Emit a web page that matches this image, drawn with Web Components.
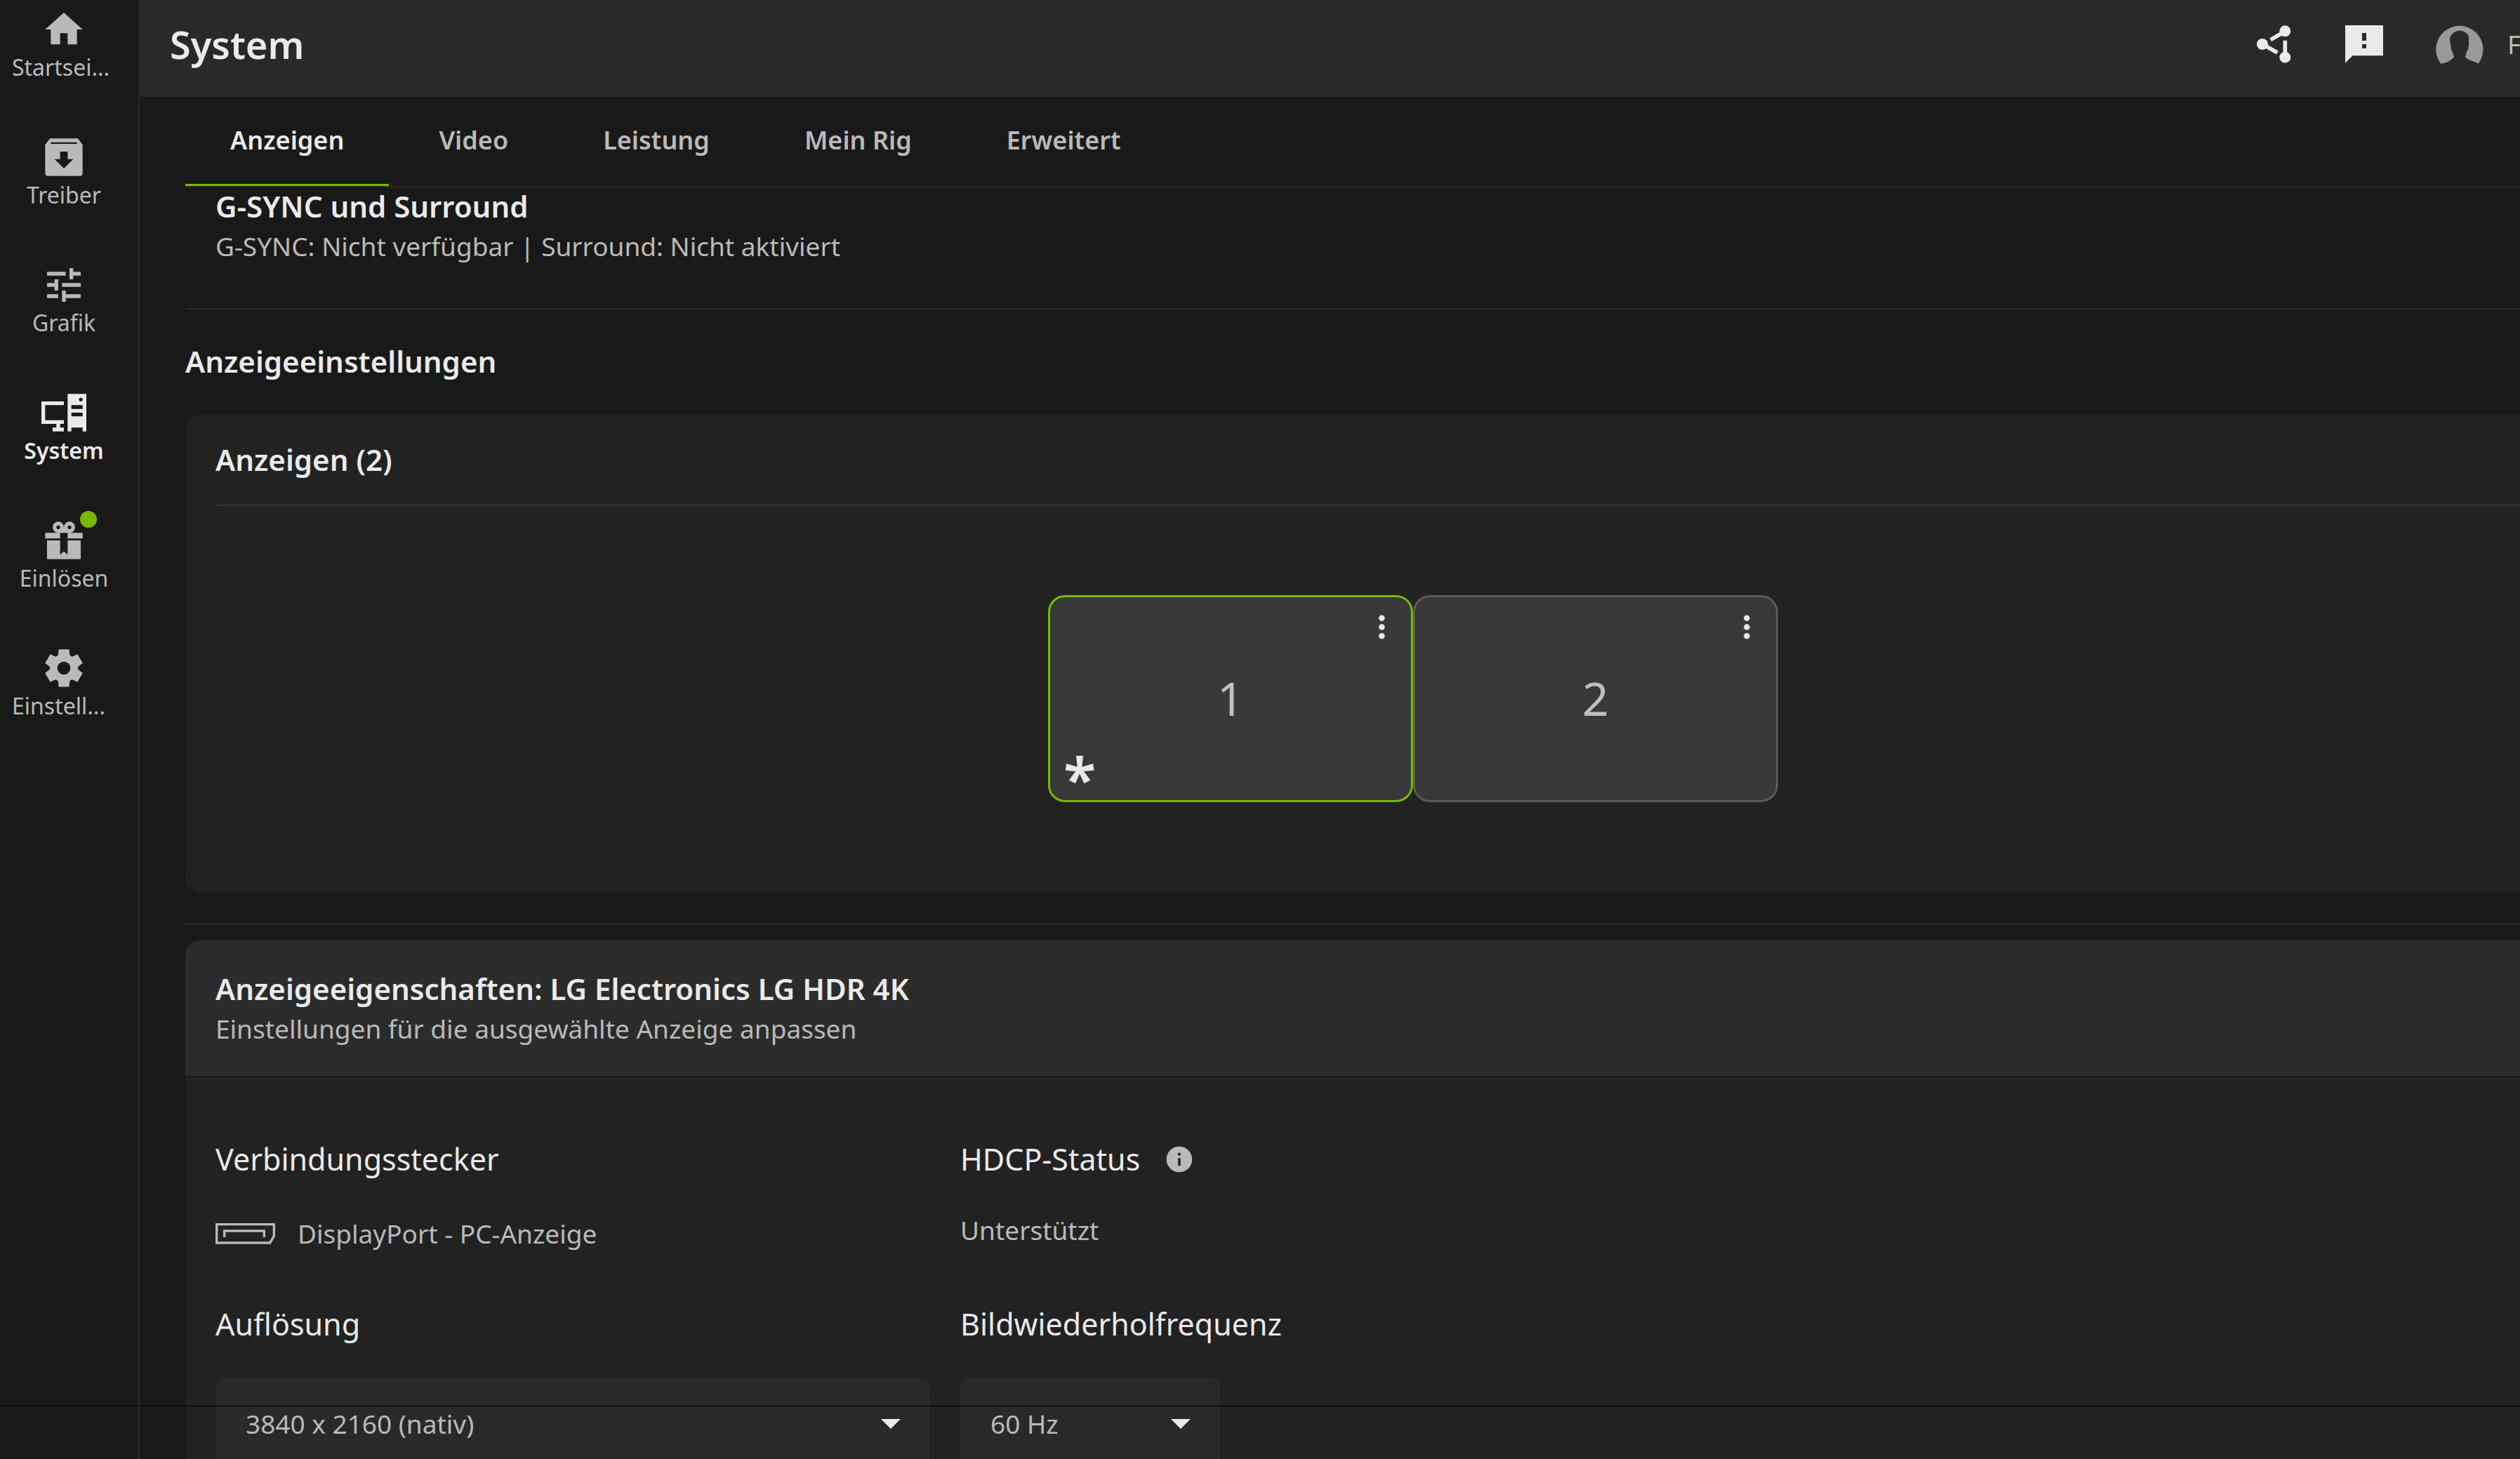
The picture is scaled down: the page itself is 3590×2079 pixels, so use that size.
<!DOCTYPE html>
<html lang="de">
<head>
<meta charset="utf-8">
<title>System</title>
<style>
    html, body {
        height: 100%;
        margin: 0;
        overflow: hidden;
        background: #191919;
    }

    body {
        --green: #76b900;
        --text: #eaeaea;
        --muted: #bababa;
        --line: #2a2a2a;
        --pad: 43px;
        color: var(--text);
        font-family: "Noto Sans", "Open Sans", sans-serif;
        font-size: 37px;
        line-height: 50px;
    }
</style>
</head>
<body>

<app-shell>
    <side-nav slot="nav">
        <nav-item icon="home" href="#home" clipped>Startsei...</nav-item>
        <nav-item icon="drivers" href="#drivers">Treiber</nav-item>
        <nav-item icon="tune" href="#graphics">Grafik</nav-item>
        <nav-item icon="system" href="#system" active>System</nav-item>
        <nav-item icon="gift" href="#redeem" badge>Einlösen</nav-item>
        <nav-item icon="gear" href="#settings" clipped>Einstell...</nav-item>
    </side-nav>

    <page-header slot="header" user="F">System</page-header>

    <tab-bar slot="tabs" tabs="Anzeigen,Video,Leistung,Mein Rig,Erweitert"></tab-bar>

    <summary-row>
        <span slot="title">G-SYNC und Surround</span>
        G-SYNC: Nicht verfügbar | Surround: Nicht aktiviert
    </summary-row>

    <section-title>Anzeigeeinstellungen</section-title>

    <display-map heading="Anzeigen (2)">
        <monitor-tile number="1" selected primary></monitor-tile>
        <monitor-tile number="2"></monitor-tile>
    </display-map>

    <property-card>
        <span slot="title">Anzeigeeigenschaften: LG Electronics LG HDR 4K</span>
        <span slot="subtitle">Einstellungen für die ausgewählte Anzeige anpassen</span>
        <info-field label="Verbindungsstecker" icon="port">DisplayPort - PC-Anzeige</info-field>
        <info-field label="HDCP-Status" hint>Unterstützt</info-field>
        <select-field label="Auflösung" value="3840 x 2160 (nativ)"></select-field>
        <select-field label="Bildwiederholfrequenz" value="60 Hz" style="--select-width: 370px"></select-field>
    </property-card>
</app-shell>

<script>
(function() {
    'use strict';

    // Icon name -> [viewBox, markup]
    const ICONS = {
        home: ['0 0 24 24', '<path d="M10 20v-6h4v6h5v-8h3L12 3 2 12h3v8z"/>'],
        drivers: ['0 0 24 24', '<path fill-rule="evenodd" d="M4.6 2h14.8L22 5.3v15.2a1.5 1.5 0 0 1-1.5 1.5h-17A1.5 1.5 0 0 1 2 20.5V5.3zM5.4 4a.4.4 0 0 0 0 .9h13.2a.4.4 0 0 0 0-.9zM10 9v4H7l5 5 5-5h-3V9z"/>'],
        tune: ['0 0 24 24', '<path d="M3 17v2h6v-2H3zM3 5v2h10V5H3zm10 16v-2h8v-2h-8v-2h-2v6h2zM7 9v2H3v2h4v2h2V9H7zm14 4v-2H11v2h10zm-6-4h2V7h4V5h-4V3h-2v6z"/>'],
        system: ['0 0 24 24', '<path fill-rule="evenodd" d="M0 6h12v2H2v8h10v2h-2v2h2v2H6v-2h2v-2H0zM14 2h10v20h-2v-2h-6v2h-2zM16 8v2h6V8zM16 12v2h6v-2zM21 4a1 1 0 1 0 .1 0z"/>'],
        gift: ['0 0 24 24', '<g fill="none" stroke="currentColor" stroke-width="2"><circle cx="9" cy="5" r="2"/><circle cx="15" cy="5" r="2"/></g><path d="M12 4.2L14.6 8H9.400zM2 8h8v3H2zM14 8h8v3h-8zM3 12h7v7.700l2-1.900 2 1.900V12h7v10H3z"/>'],
        gear: ['0 0 24 24', '<path fill-rule="evenodd" d="m9.250 22-.4-3.200q-.325-.125-.612-.3-.288-.175-.563-.375L4.700 19.375l-2.750-4.750 2.575-1.950Q4.500 12.500 4.500 12.338v-.675q0-.163.025-.338L1.950 9.375l2.750-4.750 2.975 1.250q.275-.2.575-.375.3-.175.6-.3l.4-3.200h5.500l.4 3.200q.325.125.613.3.287.175.562.375l2.975-1.250 2.750 4.750-2.575 1.950q.025.175.025.338v.674q0 .163-.05.338l2.575 1.950-2.750 4.750-2.950-1.250q-.275.2-.575.375-.3.175-.6.3l-.4 3.200ZM12 8.500a3.500 3.500 0 1 0 0 7 3.500 3.500 0 0 0 0-7z"/>'],
        share: ['0 0 192 192', '<circle cx="45" cy="96" r="24"/><circle cx="142" cy="40" r="24"/><circle cx="142" cy="152" r="24"/><path fill="none" stroke="currentColor" stroke-width="17" d="M80 77l50-29M60 104l49 28M142 80v60"/>'],
        feedback: ['0 0 192 192', '<path fill-rule="evenodd" d="M15 15h162v130H47l-32 31zM87 48v33h18V48zM87 96v17h18V96z"/>'],
        avatar: ['0 0 204 170', '<path d="M20 169A102 102 0 1 1 183 169L172 163C150 155 135 152 125 138Q131 132 132 118Q138 112 139 104L142 84L141 50Q130 27 98 26Q66 32 60 60L61 82L64 88L65 106Q67 113 71 118Q72 132 79 138Q60 165 20 169z"/>'],
        more: ['0 0 24 24', '<circle cx="12" cy="6" r="2"/><circle cx="12" cy="12" r="2"/><circle cx="12" cy="18" r="2"/>'],
        port: ['0 0 255 90', '<path fill="none" stroke="currentColor" stroke-width="10" d="M5 5h245v49l-17 30H5zM38 60V33h170v27"/>'],
        info: ['0 0 24 24', '<path fill-rule="evenodd" d="M12 2a10 10 0 1 0 0 20 10 10 0 0 0 0-20zM11 7h2v2h-2zM11 11h2v6h-2z"/>'],
        arrow: ['0 0 28 14', '<path d="M0 0h28L14 14z"/>']
    };

    function icon(name) {
        const [viewBox, body] = ICONS[name];
        return `<svg class="icon" viewBox="${viewBox}" fill="currentColor" aria-hidden="true">${body}</svg>`;
    }

    // Shared reset for every shadow root
    const BASE = `
        *, *::before { box-sizing: border-box; }
        svg { display: block; }
        h1, h2, h3, p { margin: 0; font-size: inherit; font-weight: inherit; }
        h2 { font-size: 42px; font-weight: 600; }
        a { color: inherit; text-decoration: none; }
        button, select {
            margin: 0; padding: 0; border: 0; background: none;
            color: inherit; font: inherit; cursor: pointer;
        }
    `;

    class BaseElement extends HTMLElement {
        constructor() {
            super();
            this.attachShadow({ mode: 'open' });
        }

        connectedCallback() {
            this.shadowRoot.innerHTML = `<style>${BASE}${this.styles()}</style>${this.markup()}`;
        }
    }

    class AppShell extends BaseElement {
        styles() {
            return `
                :host { display: flex; height: 100vh; overflow: hidden; }
                .page { flex: 1; min-width: 0; display: flex; flex-direction: column; }
                main { flex: 1; min-height: 0; overflow: hidden; padding-left: 65px; }
                .edge {
                    position: fixed; left: 0; right: 0; bottom: 75px;
                    height: 1px; background: #000; pointer-events: none;
                }
            `;
        }

        markup() {
            return `
                <slot name="nav"></slot>
                <div class="page">
                    <slot name="header"></slot>
                    <slot name="tabs"></slot>
                    <main><slot></slot></main>
                </div>
                <div class="edge"></div>
            `;
        }
    }

    class SideNav extends BaseElement {
        styles() {
            return `
                :host { display: block; flex: none; width: 199px; border-right: 2px solid var(--line); box-sizing: border-box; }
                nav { display: flex; flex-direction: column; gap: 75px; padding: 10px 15px 0 0; }
            `;
        }

        markup() {
            return '<nav aria-label="Hauptmenü"><slot></slot></nav>';
        }
    }

    class NavItem extends BaseElement {
        styles() {
            return `
                :host { display: block; color: var(--muted); font-size: 32px; line-height: 43px; }
                :host([active]) { color: var(--text); font-weight: 600; }
                :host([clipped]) .label { width: 148px; }
                a { display: flex; flex-direction: column; align-items: center; white-space: nowrap; }
                .glyph { position: relative; }
                .icon { width: 64px; height: 64px; }
                .dot {
                    position: absolute; top: -10px; right: -15px;
                    width: 24px; height: 24px; border-radius: 50%; background: var(--green);
                }
            `;
        }

        markup() {
            const dot = this.hasAttribute('badge') ? '<span class="dot"></span>' : '';
            return `
                <a href="${this.getAttribute('href')}">
                    <span class="glyph">${icon(this.getAttribute('icon'))}${dot}</span>
                    <span class="label"><slot></slot></span>
                </a>
            `;
        }
    }

    class PageHeader extends BaseElement {
        styles() {
            return `
                :host { display: block; flex: none; background: #292929; }
                header {
                    display: flex; align-items: center; justify-content: space-between;
                    height: 138px; padding: 0 0 12px 43px;
                }
                h1 { font-size: 54px; line-height: 64px; font-weight: 600; }
                .actions, .user { display: flex; align-items: center; }
                .actions { gap: 64px; }
                .icon { width: 64px; height: 64px; }
                .user { gap: 34px; padding-left: 6px; color: var(--muted); }
                .user .icon { width: 68px; height: 56px; color: #999; }
                .name { width: 18px; overflow: hidden; text-align: left; }
            `;
        }

        markup() {
            return `
                <header>
                    <h1><slot></slot></h1>
                    <div class="actions">
                        <button aria-label="Teilen">${icon('share')}</button>
                        <button aria-label="Feedback">${icon('feedback')}</button>
                        <button class="user">${icon('avatar')}<span class="name">${this.getAttribute('user')}</span></button>
                    </div>
                </header>
            `;
        }
    }

    class TabBar extends BaseElement {
        styles() {
            return `
                :host { display: block; flex: none; padding-left: 65px; }
                .tabs { display: flex; gap: 7px; border-bottom: 2px solid var(--line); }
                button {
                    height: 127px; padding: 0 64px; color: var(--muted);
                    border-bottom: 3px solid transparent; font-size: 36px; font-weight: 600;
                }
                button[aria-selected="true"] { color: var(--text); border-color: var(--green); }
            `;
        }

        markup() {
            const tabs = this.getAttribute('tabs').split(',');
            return `<div class="tabs" role="tablist">${tabs.map((tab, i) =>
                `<button role="tab" aria-selected="${i === 0}">${tab}</button>`).join('')}</div>`;
        }
    }

    class SummaryRow extends BaseElement {
        styles() {
            return `
                :host { display: block; padding: 2px var(--pad) 63px; border-bottom: 2px solid var(--line); }
                h2 { margin-bottom: 7px; }
                p { color: var(--muted); }
            `;
        }

        markup() {
            return '<h2><slot name="title"></slot></h2><p><slot></slot></p>';
        }
    }

    class SectionTitle extends BaseElement {
        styles() {
            return ':host { display: block; padding: 49px 0 51px; }';
        }

        markup() {
            return '<h2><slot></slot></h2>';
        }
    }

    class DisplayMap extends BaseElement {
        styles() {
            return `
                :host { display: block; padding-bottom: 44px; border-bottom: 2px solid var(--line); margin-bottom: 22px; }
                section { padding: 39px 0 0 var(--pad); border-radius: 21px 0 0 21px; background: #222; }
                h2 { padding-bottom: 39px; border-bottom: 2px solid #333; }
                .map { display: flex; justify-content: center; padding: 127px 0 129px 129px; }
            `;
        }

        markup() {
            return `
                <section>
                    <h2>${this.getAttribute('heading')}</h2>
                    <div class="map"><slot></slot></div>
                </section>
            `;
        }
    }

    class MonitorTile extends BaseElement {
        styles() {
            return `
                :host {
                    position: relative; display: block; box-sizing: border-box;
                    width: 520px; height: 295px;
                    border: 3px solid #5a5a5a; border-radius: 24px; background: #393939;
                }
                :host([selected]) { border-color: var(--green); }
                .screen {
                    width: 100%; height: 100%; padding-bottom: 4px;
                    color: #c0c0c0; font-size: 66px; line-height: 80px;
                }
                .more { position: absolute; top: 17px; right: 16px; }
                .more .icon { width: 51px; height: 51px; }
                .star {
                    position: absolute; left: 19px; bottom: 0;
                    font-size: 85px; line-height: 64px; font-weight: 600;
                }
            `;
        }

        markup() {
            const number = this.getAttribute('number');
            return `
                <button class="screen">${number}</button>
                <button class="more" aria-label="Optionen für Anzeige ${number}">${icon('more')}</button>
                ${this.hasAttribute('primary') ? '<span class="star">*</span>' : ''}
            `;
        }
    }

    class PropertyCard extends BaseElement {
        styles() {
            return `
                :host { display: block; border-radius: 21px 0 0 0; overflow: hidden; background: #222; }
                header { padding: 44px var(--pad) 42px; background: #2b2b2b; border-bottom: 2px solid #191919; }
                h2 { margin-bottom: 7px; }
                p { color: var(--muted); }
                .fields {
                    display: grid; grid-template-columns: 1018px max-content;
                    gap: 74px var(--pad); padding: 92px var(--pad) 74px;
                }
            `;
        }

        markup() {
            return `
                <header>
                    <h2><slot name="title"></slot></h2>
                    <p><slot name="subtitle"></slot></p>
                </header>
                <div class="fields"><slot></slot></div>
            `;
        }
    }

    class InfoField extends BaseElement {
        styles() {
            return `
                :host { display: flex; flex-direction: column; gap: 51px; }
                h3 { display: flex; align-items: center; gap: 34px; font-size: 43px; }
                h3 .icon { width: 44px; height: 44px; color: var(--muted); }
                p { display: flex; align-items: center; gap: 32px; color: var(--muted); }
                p.with-icon { line-height: 60px; }
                p .icon { width: 85px; height: 30px; }
            `;
        }

        markup() {
            const name = this.getAttribute('icon');
            const hint = this.hasAttribute('hint') ? `<button aria-label="Info">${icon('info')}</button>` : '';
            return `
                <h3>${this.getAttribute('label')}${hint}</h3>
                <p class="${name ? 'with-icon' : ''}">${name ? icon(name) : ''}<span><slot></slot></span></p>
            `;
        }
    }

    class SelectField extends BaseElement {
        styles() {
            return `
                :host { display: flex; flex-direction: column; gap: 51px; }
                label { font-size: 43px; }
                .box { display: grid; align-items: center; width: var(--select-width, 100%); }
                .box > * { grid-area: 1 / 1; }
                select {
                    appearance: none; width: 100%; height: 132px; padding: 0 var(--pad);
                    border-radius: 11px; background: #292929; color: var(--muted);
                }
                .icon { justify-self: end; width: 28px; height: 14px; margin-right: 42px; pointer-events: none; }
            `;
        }

        markup() {
            return `
                <label for="choice">${this.getAttribute('label')}</label>
                <div class="box">
                    <select id="choice"><option>${this.getAttribute('value')}</option></select>
                    ${icon('arrow')}
                </div>
            `;
        }
    }

    customElements.define('app-shell', AppShell);
    customElements.define('side-nav', SideNav);
    customElements.define('nav-item', NavItem);
    customElements.define('page-header', PageHeader);
    customElements.define('tab-bar', TabBar);
    customElements.define('summary-row', SummaryRow);
    customElements.define('section-title', SectionTitle);
    customElements.define('display-map', DisplayMap);
    customElements.define('monitor-tile', MonitorTile);
    customElements.define('property-card', PropertyCard);
    customElements.define('info-field', InfoField);
    customElements.define('select-field', SelectField);
})();
</script>
</body>
</html>
